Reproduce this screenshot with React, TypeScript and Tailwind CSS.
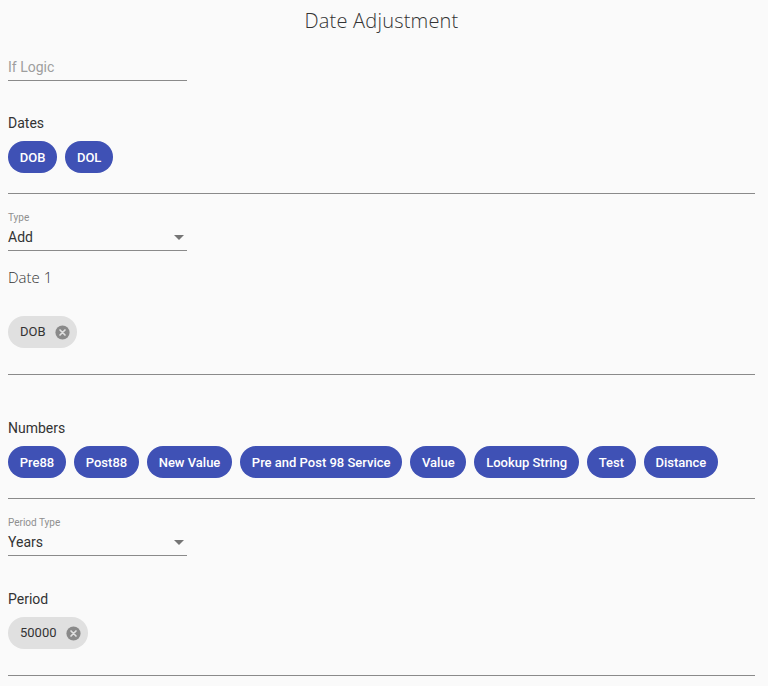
import { useState } from "react";

const numbers = [
  "Pre88",
  "Post88",
  "New Value",
  "Pre and Post 98 Service",
  "Value",
  "Lookup String",
  "Test",
  "Distance",
];

const Chip = ({ label }: { label: string }) => (
  <button className="h-8 px-[11.75px] rounded-full bg-[#3f51b5] text-white text-[13px] font-medium leading-none">
    {label}
  </button>
);

const RemovableChip = ({ label }: { label: string }) => (
  <div className="h-8 inline-flex items-center pl-3 pr-[6px] rounded-full bg-[#e0e0e0] text-[#333] text-[13px] font-normal">
    <span>{label}</span>
    <svg width="17" height="17" viewBox="0 0 24 24" className="ml-[8px]">
      <circle cx="12" cy="12" r="10" fill="#8a8a8a" />
      <path d="M8.5 8.5l7 7M15.5 8.5l-7 7" stroke="#e0e0e0" strokeWidth="2.4" strokeLinecap="round" />
    </svg>
  </div>
);

const SelectField = ({ label, value }: { label: string; value: string }) => (
  <div className="w-[179px] border-b border-[#8a8a8a] pb-[4px]">
    <div className="text-[10px] text-[#8f8f8f] leading-3">{label}</div>
    <div className="flex items-center justify-between mt-[4px]">
      <span className="text-[14px] text-[#333] leading-[18px]">{value}</span>
      <svg width="10" height="5" viewBox="0 0 10 5" className="mr-[3px]">
        <path d="M0 0h10L5 5z" fill="#757575" />
      </svg>
    </div>
  </div>
);

const Divider = () => <div className="h-px bg-[#8a8a8a]" />;

export default function App() {
  const [ifLogic, setIfLogic] = useState("");

  return (
    <div className="min-h-[686px] bg-[#fafafa] pl-2 pr-[13px] font-['Roboto',sans-serif]">
      {/* Title */}
      <h1 className="pt-[9px] text-center text-[20px] font-light text-[#333] leading-6 tracking-[0.2px] font-['Open_Sans',sans-serif]">
        Date Adjustment
      </h1>

      {/* If Logic */}
      <input
        value={ifLogic}
        onChange={(e) => setIfLogic(e.target.value)}
        placeholder="If Logic"
        className="mt-[25px] w-[179px] bg-transparent border-b border-[#8a8a8a] pb-[4px] text-[14px] leading-[18px] placeholder:text-[#9e9e9e] outline-none"
      />

      {/* Dates */}
      <div className="mt-[33px] text-[14px] text-[#333] leading-[18px]">Dates</div>
      <div className="flex gap-2 mt-[9px]">
        <Chip label="DOB" />
        <Chip label="DOL" />
      </div>
      <div className="mt-[20px]">
        <Divider />
      </div>

      <div className="mt-[18px]">
        <SelectField label="Type" value="Add" />
      </div>

      <div className="mt-[16px] text-[15px] text-[#333] leading-5 font-['Open_Sans',sans-serif] font-light">
        Date 1
      </div>
      <div className="mt-[29px]">
        <RemovableChip label="DOB" />
      </div>
      <div className="mt-[26px]">
        <Divider />
      </div>

      {/* Numbers */}
      <div className="mt-[44px] text-[14px] text-[#333] leading-[18px]">Numbers</div>
      <div className="flex flex-wrap gap-2 mt-[9px]">
        {numbers.map((n) => (
          <Chip key={n} label={n} />
        ))}
      </div>
      <div className="mt-[20px]">
        <Divider />
      </div>

      <div className="mt-[18px]">
        <SelectField label="Period Type" value="Years" />
      </div>

      <div className="mt-[34px] text-[14px] text-[#333] leading-[18px]">Period</div>
      <div className="mt-[9px]">
        <RemovableChip label="50000" />
      </div>
      <div className="mt-[26px]">
        <Divider />
      </div>
    </div>
  );
}
